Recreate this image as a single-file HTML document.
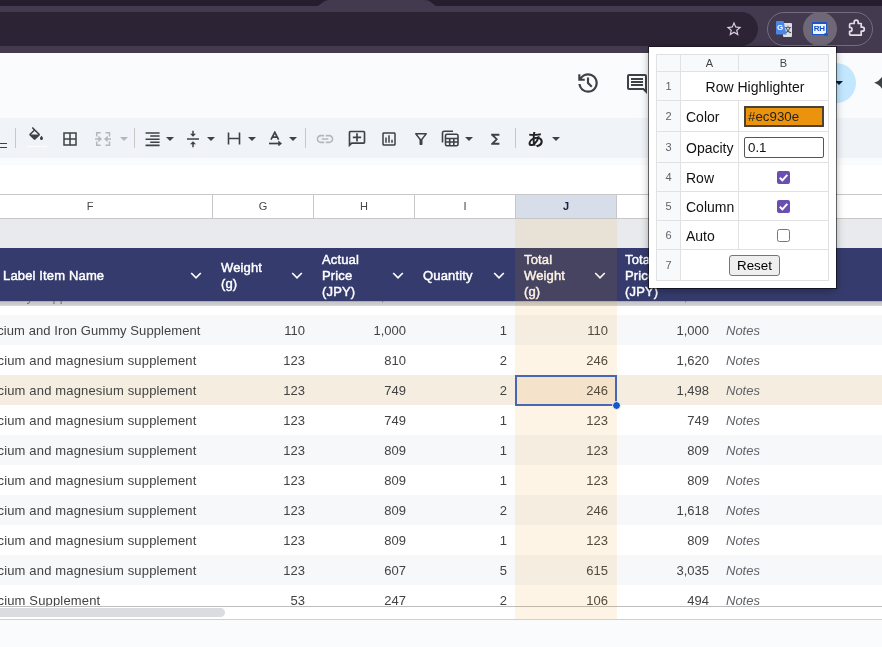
<!DOCTYPE html>
<html lang="en"><head><meta charset="utf-8"><title>Row Highlighter</title>
<style>
*{box-sizing:border-box;margin:0;padding:0}
html,body{width:882px;height:647px;overflow:hidden;background:#f9fbfd;font-family:"Liberation Sans","Noto Sans CJK JP",sans-serif}
#root{position:relative;width:882px;height:647px;overflow:hidden;will-change:transform}
.abs{position:absolute}
.cell{position:absolute;font-size:13px;color:#434343;white-space:nowrap;line-height:32px;height:30px}
.num{text-align:right}
.hd{position:absolute;font-size:13px;font-weight:400;color:#fff;line-height:16px;white-space:nowrap;letter-spacing:0.15px;-webkit-text-stroke:0.45px #fff}
.colh{position:absolute;top:195px;height:23px;line-height:23px;font-size:11px;color:#444746;text-align:center}
.pl{position:absolute;font-size:14px;color:#111;line-height:20px;white-space:nowrap}
.rn{position:absolute;left:657px;width:23px;text-align:center;font-size:11px;color:#5f6368;line-height:14px}
</style></head>
<body><div id="root">
<div class="abs" style="left:0;top:0;width:882px;height:53px;background:#443a50"></div>
<div class="abs" style="left:0;top:0;width:882px;height:6px;background:#261e2e"></div>
<svg class="abs" style="left:300px;top:0" width="150" height="7" viewBox="0 0 150 7"><path d="M12 7 C22 7 21 0 30 0 H124 C133 0 132 7 142 7 Z" fill="#443a50"/></svg>
<div class="abs" style="left:-40px;top:12px;width:798px;height:34px;border-radius:17px;background:#2c2335"></div>
<svg style="position:absolute;left:725px;top:20px" width="18" height="18" viewBox="0 0 24 24" ><path fill="#dacfe1" d="M22 9.24l-7.19-.62L12 2 9.19 8.63 2 9.24l5.46 4.73L5.820 21 12 17.27 18.18 21l-1.630-7.030L22 9.240zM12 15.400l-3.760 2.270 1-4.280-3.320-2.880 4.380-.380L12 6.100l1.710 4.040 4.380.38-3.320 2.880 1 4.280L12 15.400z"/></svg>
<div class="abs" style="left:767px;top:12px;width:106px;height:34px;border-radius:17px;border:1px solid #756c80"></div>
<div class="abs" style="left:803px;top:12px;width:34px;height:34px;border-radius:17px;background:#6f6878"></div>
<div class="abs" style="left:783px;top:23px;width:9px;height:14px;background:#dcdfe4;border-radius:1px;color:#4a4f57;font-size:7px;line-height:14px;text-align:right;padding-right:0.5px;font-weight:700">文</div>
<svg class="abs" style="left:776px;top:21px" width="11" height="14" viewBox="0 0 11 14"><path d="M1 0H7.500L10.500 13.500H1a1 1 0 0 1-1-1V1a1 1 0 0 1 1-1z" fill="#4a86e8"/></svg>
<div class="abs" style="left:776px;top:21px;width:8px;height:13px;color:#fff;font-size:8px;font-weight:700;line-height:13px;text-align:center">G</div>
<div class="abs" style="left:812px;top:22px;width:14.500px;height:13px;background:#eef3fe;border-top:2px solid #1a56c4;border-left:1.500px solid #1a56c4;border-right:0.500px solid #1a56c4;border-bottom:0.500px solid #1a56c4;color:#1a4fc0;font-size:8px;font-weight:700;line-height:10px;text-align:center;letter-spacing:-0.2px">RH</div>
<div class="abs" style="left:824px;top:32.500px;width:3.500px;height:3.500px;border-radius:2px;background:#1a56c4"></div>
<svg style="position:absolute;left:847px;top:18px" width="20" height="20" viewBox="0 0 20 20" ><path fill="none" stroke="#e3dde8" stroke-width="1.7" stroke-linejoin="round" d="M3.800 5.500H7.200V4.200a2 2 0 0 1 4 0V5.500H14.200V9.200h1.100a2 2 0 0 1 0 4H14.200V17.200H3.800a1.200 1.200 0 0 1-1.200-1.200V13.400h.4a2 2 0 0 0 0-4h-.4V6.700a1.200 1.200 0 0 1 1.200-1.200z"/></svg>
<svg style="position:absolute;left:575px;top:69.5px" width="26" height="26" viewBox="0 0 24 24" ><path fill="#3f4244" d="M12 21q-3.450 0-6.012-2.287T3.050 13H5.100q.35 2.600 2.313 4.300T12 19q2.925 0 4.963-2.037T19 12t-2.037-4.963T12 5q-1.725 0-3.225.8T6.250 8H9v2H3V4h2v2.350q1.275-1.600 3.113-2.475T12 3q1.875 0 3.513.712t2.850 1.925 1.925 2.850T21 12t-.712 3.513-1.925 2.850-2.850 1.925T12 21m2.800-4.800L11 12.400V7h2v4.600l3.200 3.200z"/></svg>
<svg style="position:absolute;left:625px;top:72px" width="24" height="24" viewBox="0 0 24 24" ><path fill="#3f4244" d="M21.990 4c0-1.100-.89-2-1.990-2H4c-1.100 0-2 .9-2 2v12c0 1.100.9 2 2 2h14l4 4-.01-18zM20 4v13.170L18.830 16H4V4h16zM6 12h12v2H6zm0-3h12v2H6zm0-3h12v2H6z"/></svg>
<div class="abs" style="left:760px;top:63px;width:96px;height:40px;border-radius:20px;background:#c2e7ff"></div>
<svg style="position:absolute;left:835px;top:81px" width="8" height="4" viewBox="0 0 8 4"><path d="M0 0h8L4 4z" fill="#001d35"/></svg>
<svg class="abs" style="left:870px;top:70px" width="12" height="26" viewBox="870 70 12 26"><path fill="#3f4244" d="M874.200 82.800Q879.200 81.300 882.500 76.300V89.500Q879.200 84.300 874.200 82.800z"/></svg>
<div class="abs" style="left:-30px;top:118px;width:960px;height:40px;border-radius:20px;background:#f0f4f9"></div>
<div class="abs" style="left:0;top:143px;width:7px;height:1px;background:#3f4244"></div>
<div class="abs" style="left:0;top:147px;width:7px;height:1px;background:#3f4244"></div>
<div class="abs" style="left:15px;top:128px;width:1px;height:20px;background:#c7c7c7"></div>
<svg style="position:absolute;left:26.6px;top:126.5px" width="18.3" height="18.3" viewBox="0 0 24 24" ><path fill="#3f4244" d="M16.560 8.940L7.620 0 6.210 1.410l2.380 2.380-5.150 5.150c-.59.590-.59 1.540 0 2.120l5.500 5.500c.29.290.68.440 1.060.440s.77-.15 1.060-.44l5.500-5.500c.59-.58.590-1.530 0-2.120zM5.210 10L10 5.210 14.790 10H5.210zM19 11.500s-2 2.170-2 3.500c0 1.100.9 2 2 2s2-.9 2-2c0-1.330-2-3.500-2-3.500z"/></svg>
<div class="abs" style="left:27px;top:146px;width:20px;height:1px;background:#fafcfe"></div>
<svg style="position:absolute;left:61px;top:130px" width="18" height="18" viewBox="0 0 24 24" ><path fill="#3f4244" d="M3 3v18h18V3H3zm8 16H5v-6h6v6zm0-8H5V5h6v6zm8 8h-6v-6h6v6zm0-8h-6V5h6v6z"/></svg>
<svg style="position:absolute;left:94px;top:131px" width="18" height="16" viewBox="0 0 18 16" ><g fill="none" stroke="#b4b8bc" stroke-width="1.5"><path d="M6.700 1.700H2.700V5.500M2.700 10.500V14.200H6.700M11.500 1.700H15.500V5.500M15.500 10.500V14.200H11.500"/><path d="M1 8H5M17 8H13"/></g><path fill="#b4b8bc" d="M4.300 4.800L8 8L4.300 11.200zM13.700 4.800L10 8L13.700 11.200z"/></svg>
<svg style="position:absolute;left:120px;top:137px" width="8" height="4" viewBox="0 0 8 4"><path d="M0 0h8L4 4z" fill="#b4b8bc"/></svg>
<div class="abs" style="left:134px;top:128px;width:1px;height:20px;background:#c7c7c7"></div>
<svg style="position:absolute;left:139.5px;top:126px" width="24" height="24" viewBox="0 0 24 24" ><path fill="#3f4244" transform="translate(3.2,3.8) scale(0.78)" d="M3 21h18v-2H3v2zm6-4h12v-2H9v2zm-6-4h18v-2H3v2zm6-4h12V7H9v2zM3 3v2h18V3H3z"/></svg>
<svg style="position:absolute;left:166px;top:137px" width="8" height="4" viewBox="0 0 8 4"><path d="M0 0h8L4 4z" fill="#3f4244"/></svg>
<svg style="position:absolute;left:184px;top:130px" width="18" height="18" viewBox="0 0 24 24" ><path fill="#3f4244" d="M8 19h3v4h2v-4h3l-4-4-4 4zm8-14h-3V1h-2v4H8l4 4 4-4zM4 11v2h16v-2H4z"/></svg>
<svg style="position:absolute;left:207px;top:137px" width="8" height="4" viewBox="0 0 8 4"><path d="M0 0h8L4 4z" fill="#3f4244"/></svg>
<svg style="position:absolute;left:227px;top:131px" width="15" height="15" viewBox="0 0 15 15" ><g fill="none" stroke="#3f4244" stroke-width="1.6"><path d="M1.500 1.500v12M12.500 1.500v12M1.500 7.500h11"/></g></svg>
<svg style="position:absolute;left:248px;top:137px" width="8" height="4" viewBox="0 0 8 4"><path d="M0 0h8L4 4z" fill="#3f4244"/></svg>
<svg style="position:absolute;left:268px;top:131px" width="15" height="15" viewBox="0 0 15 15" ><g fill="none" stroke="#3f4244" stroke-width="1.7"><path d="M3 8.700L6.800 1.300 10.600 8.700M4.300 6.200h5"/><path d="M1 12.500h10.500"/></g><path fill="#3f4244" d="M10.300 9.500L14 12.500L10.300 15.500z"/></svg>
<svg style="position:absolute;left:289px;top:137px" width="8" height="4" viewBox="0 0 8 4"><path d="M0 0h8L4 4z" fill="#3f4244"/></svg>
<div class="abs" style="left:305px;top:128px;width:1px;height:20px;background:#c7c7c7"></div>
<svg style="position:absolute;left:315px;top:129px" width="20" height="20" viewBox="0 0 24 24" ><path fill="#b4b8bc" d="M3.900 12c0-1.710 1.390-3.100 3.100-3.100h4V7H7c-2.760 0-5 2.240-5 5s2.240 5 5 5h4v-1.900H7c-1.710 0-3.100-1.390-3.100-3.100zM8 13h8v-2H8v2zm9-6h-4v1.900h4c1.710 0 3.100 1.390 3.100 3.100s-1.390 3.100-3.100 3.100h-4V17h4c2.760 0 5-2.240 5-5s-2.240-5-5-5z"/></svg>
<svg style="position:absolute;left:347px;top:129px" width="20" height="20" viewBox="0 0 24 24" ><path fill="#3f4244" transform="translate(24,0) scale(-1,1)" d="M22 4c0-1.100-.9-2-2-2H4c-1.100 0-2 .9-2 2v12c0 1.100.9 2 2 2h14l4 4V4zm-2 13.170L18.830 16H4V4h16v13.170zM13 5h-2v4H7v2h4v4h2v-4h4V9h-4z"/></svg>
<svg style="position:absolute;left:380px;top:130px" width="18" height="18" viewBox="0 0 24 24" ><path fill="#3f4244" d="M9 17H7v-7h2v7zm4 0h-2V7h2v10zm4 0h-2v-4h2v4zm2 2H5V5h14v14zm0-16H5c-1.100 0-2 .9-2 2v14c0 1.100.9 2 2 2h14c1.100 0 2-.9 2-2V5c0-1.100-.9-2-2-2z"/></svg>
<svg style="position:absolute;left:412px;top:130px" width="18" height="18" viewBox="0 0 24 24" ><path fill="#3f4244" d="M7 6h10l-5.010 6.300L7 6zm-2.750-.39C6.270 8.200 10 13 10 13v6c0 .55.45 1 1 1h2c.55 0 1-.45 1-1v-6s3.720-4.800 5.740-7.390c.51-.66.040-1.610-.79-1.610H5.040c-.83 0-1.300.95-.79 1.610z"/></svg>
<svg style="position:absolute;left:441px;top:130px" width="19" height="17" viewBox="0 0 19 17" ><g fill="none" stroke="#3f4244" stroke-width="1.6"><path d="M1.500 12.500V3a1.800 1.800 0 0 1 1.800-1.800H12"/><rect x="4.500" y="4.200" width="12.500" height="11.500" rx="1.500"/><path d="M4.500 8.500h12.500M4.500 12h12.500M8.700 8.500v7M12.800 8.500v7"/></g></svg>
<svg style="position:absolute;left:465px;top:137px" width="8" height="4" viewBox="0 0 8 4"><path d="M0 0h8L4 4z" fill="#3f4244"/></svg>
<svg style="position:absolute;left:487px;top:131px" width="16.5" height="16.5" viewBox="0 0 24 24" ><path fill="#3f4244" d="M18 4H6v2l6.500 6L6 18v2h12v-3h-7l5-5-5-5h7z"/></svg>
<div class="abs" style="left:515px;top:128px;width:1px;height:20px;background:#c7c7c7"></div>
<div class="abs" style="left:527px;top:129.500px;font-size:17px;font-weight:700;line-height:22px;color:#202124">あ</div>
<svg style="position:absolute;left:552px;top:137px" width="8" height="4" viewBox="0 0 8 4"><path d="M0 0h8L4 4z" fill="#3f4244"/></svg>
<div class="abs" style="left:0;top:165px;width:882px;height:29px;background:#fff"></div>
<div class="abs" style="left:0;top:194px;width:882px;height:412px;background:#fff"></div>
<div class="abs" style="left:0;top:194px;width:882px;height:1px;background:#c7c7c7"></div>
<div class="abs" style="left:516px;top:195px;width:101px;height:23px;background:#d7dde9"></div>
<div class="colh" style="left:80px;width:20px">F</div>
<div class="abs" style="left:212px;top:195px;width:1px;height:23px;background:#c7c7c7"></div>
<div class="colh" style="left:213px;width:100px">G</div>
<div class="abs" style="left:313px;top:195px;width:1px;height:23px;background:#c7c7c7"></div>
<div class="colh" style="left:314px;width:100px">H</div>
<div class="abs" style="left:414px;top:195px;width:1px;height:23px;background:#c7c7c7"></div>
<div class="colh" style="left:415px;width:100px">I</div>
<div class="abs" style="left:515px;top:195px;width:1px;height:23px;background:#c7c7c7"></div>
<div class="colh" style="left:516px;width:100px;font-weight:700;color:#202040">J</div>
<div class="abs" style="left:616px;top:195px;width:1px;height:23px;background:#c7c7c7"></div>
<div class="abs" style="left:717px;top:195px;width:1px;height:23px;background:#c7c7c7"></div>
<div class="abs" style="left:0;top:218px;width:882px;height:1px;background:#c7c7c7"></div>
<div class="abs" style="left:0;top:219px;width:882px;height:29px;background:#e8eaed"></div>
<div class="abs" style="left:0;top:248px;width:882px;height:53px;background:#353b6c"></div>
<div class="abs" style="left:0;top:301px;width:882px;height:5px;background:linear-gradient(#9496ab 0,#c6c6c8 21%,#cfcfcf 80%,#dedede 100%)"></div>
<div class="hd" style="left:3px;top:268px">Label Item Name</div>
<svg class="abs" style="left:190px;top:271px" width="12" height="10" viewBox="0 0 12 10"><path d="M1.200 2l4.800 4.800L10.800 2" fill="none" stroke="#fff" stroke-width="1.7"/></svg>
<div class="hd" style="left:221px;top:260px">Weight<br>(g)</div>
<svg class="abs" style="left:291px;top:271px" width="12" height="10" viewBox="0 0 12 10"><path d="M1.200 2l4.800 4.800L10.800 2" fill="none" stroke="#fff" stroke-width="1.7"/></svg>
<div class="hd" style="left:322px;top:252px">Actual<br>Price<br>(JPY)</div>
<svg class="abs" style="left:392px;top:271px" width="12" height="10" viewBox="0 0 12 10"><path d="M1.200 2l4.800 4.800L10.800 2" fill="none" stroke="#fff" stroke-width="1.7"/></svg>
<div class="hd" style="left:423px;top:268px">Quantity</div>
<svg class="abs" style="left:493px;top:271px" width="12" height="10" viewBox="0 0 12 10"><path d="M1.200 2l4.800 4.800L10.800 2" fill="none" stroke="#fff" stroke-width="1.7"/></svg>
<div class="hd" style="left:524px;top:252px">Total<br>Weight<br>(g)</div>
<svg class="abs" style="left:594px;top:271px" width="12" height="10" viewBox="0 0 12 10"><path d="M1.200 2l4.800 4.800L10.800 2" fill="none" stroke="#fff" stroke-width="1.7"/></svg>
<div class="hd" style="left:625px;top:252px">Total<br>Price<br>(JPY)</div>
<div class="abs" style="left:0;top:301px;width:882px;height:305px;overflow:hidden">
<div class="cell" style="left:-194px;width:300px;text-align:right;top:-20.500px;color:#777">Vitamin Daily Supplement</div>
<div class="cell num" style="left:314px;width:92px;top:-20.500px;color:#777">1,000</div>
<div class="cell num" style="left:617px;width:92px;top:-20.500px;color:#777">1,000</div>
<div class="abs" style="left:0;top:14px;width:882px;height:30px;background:#f6f8f9"></div>
<div class="cell" style="left:-22.500px;top:14px;letter-spacing:0.08px">Calcium and Iron Gummy Supplement</div>
<div class="cell num" style="left:213px;width:92px;top:14px">110</div>
<div class="cell num" style="left:314px;width:92px;top:14px">1,000</div>
<div class="cell num" style="left:415px;width:92px;top:14px">1</div>
<div class="cell num" style="left:516px;width:92px;top:14px">110</div>
<div class="cell num" style="left:617px;width:92px;top:14px">1,000</div>
<div class="cell" style="left:726px;top:14px;font-style:italic;color:#5f6368">Notes</div>
<div class="abs" style="left:0;top:44px;width:882px;height:30px;background:#ffffff"></div>
<div class="cell" style="left:-22.500px;top:44px;letter-spacing:0.16px">Calcium and magnesium supplement</div>
<div class="cell num" style="left:213px;width:92px;top:44px">123</div>
<div class="cell num" style="left:314px;width:92px;top:44px">810</div>
<div class="cell num" style="left:415px;width:92px;top:44px">2</div>
<div class="cell num" style="left:516px;width:92px;top:44px">246</div>
<div class="cell num" style="left:617px;width:92px;top:44px">1,620</div>
<div class="cell" style="left:726px;top:44px;font-style:italic;color:#5f6368">Notes</div>
<div class="abs" style="left:0;top:74px;width:882px;height:30px;background:#f6f8f9"></div>
<div class="abs" style="left:0;top:74px;width:882px;height:30px;background:rgba(236,147,14,0.1)"></div>
<div class="cell" style="left:-22.500px;top:74px;letter-spacing:0.16px">Calcium and magnesium supplement</div>
<div class="cell num" style="left:213px;width:92px;top:74px">123</div>
<div class="cell num" style="left:314px;width:92px;top:74px">749</div>
<div class="cell num" style="left:415px;width:92px;top:74px">2</div>
<div class="cell num" style="left:516px;width:92px;top:74px">246</div>
<div class="cell num" style="left:617px;width:92px;top:74px">1,498</div>
<div class="cell" style="left:726px;top:74px;font-style:italic;color:#5f6368">Notes</div>
<div class="abs" style="left:0;top:104px;width:882px;height:30px;background:#ffffff"></div>
<div class="cell" style="left:-22.500px;top:104px;letter-spacing:0.16px">Calcium and magnesium supplement</div>
<div class="cell num" style="left:213px;width:92px;top:104px">123</div>
<div class="cell num" style="left:314px;width:92px;top:104px">749</div>
<div class="cell num" style="left:415px;width:92px;top:104px">1</div>
<div class="cell num" style="left:516px;width:92px;top:104px">123</div>
<div class="cell num" style="left:617px;width:92px;top:104px">749</div>
<div class="cell" style="left:726px;top:104px;font-style:italic;color:#5f6368">Notes</div>
<div class="abs" style="left:0;top:134px;width:882px;height:30px;background:#f6f8f9"></div>
<div class="cell" style="left:-22.500px;top:134px;letter-spacing:0.16px">Calcium and magnesium supplement</div>
<div class="cell num" style="left:213px;width:92px;top:134px">123</div>
<div class="cell num" style="left:314px;width:92px;top:134px">809</div>
<div class="cell num" style="left:415px;width:92px;top:134px">1</div>
<div class="cell num" style="left:516px;width:92px;top:134px">123</div>
<div class="cell num" style="left:617px;width:92px;top:134px">809</div>
<div class="cell" style="left:726px;top:134px;font-style:italic;color:#5f6368">Notes</div>
<div class="abs" style="left:0;top:164px;width:882px;height:30px;background:#ffffff"></div>
<div class="cell" style="left:-22.500px;top:164px;letter-spacing:0.16px">Calcium and magnesium supplement</div>
<div class="cell num" style="left:213px;width:92px;top:164px">123</div>
<div class="cell num" style="left:314px;width:92px;top:164px">809</div>
<div class="cell num" style="left:415px;width:92px;top:164px">1</div>
<div class="cell num" style="left:516px;width:92px;top:164px">123</div>
<div class="cell num" style="left:617px;width:92px;top:164px">809</div>
<div class="cell" style="left:726px;top:164px;font-style:italic;color:#5f6368">Notes</div>
<div class="abs" style="left:0;top:194px;width:882px;height:30px;background:#f6f8f9"></div>
<div class="cell" style="left:-22.500px;top:194px;letter-spacing:0.16px">Calcium and magnesium supplement</div>
<div class="cell num" style="left:213px;width:92px;top:194px">123</div>
<div class="cell num" style="left:314px;width:92px;top:194px">809</div>
<div class="cell num" style="left:415px;width:92px;top:194px">2</div>
<div class="cell num" style="left:516px;width:92px;top:194px">246</div>
<div class="cell num" style="left:617px;width:92px;top:194px">1,618</div>
<div class="cell" style="left:726px;top:194px;font-style:italic;color:#5f6368">Notes</div>
<div class="abs" style="left:0;top:224px;width:882px;height:30px;background:#ffffff"></div>
<div class="cell" style="left:-22.500px;top:224px;letter-spacing:0.16px">Calcium and magnesium supplement</div>
<div class="cell num" style="left:213px;width:92px;top:224px">123</div>
<div class="cell num" style="left:314px;width:92px;top:224px">809</div>
<div class="cell num" style="left:415px;width:92px;top:224px">1</div>
<div class="cell num" style="left:516px;width:92px;top:224px">123</div>
<div class="cell num" style="left:617px;width:92px;top:224px">809</div>
<div class="cell" style="left:726px;top:224px;font-style:italic;color:#5f6368">Notes</div>
<div class="abs" style="left:0;top:254px;width:882px;height:30px;background:#f6f8f9"></div>
<div class="cell" style="left:-22.500px;top:254px;letter-spacing:0.16px">Calcium and magnesium supplement</div>
<div class="cell num" style="left:213px;width:92px;top:254px">123</div>
<div class="cell num" style="left:314px;width:92px;top:254px">607</div>
<div class="cell num" style="left:415px;width:92px;top:254px">5</div>
<div class="cell num" style="left:516px;width:92px;top:254px">615</div>
<div class="cell num" style="left:617px;width:92px;top:254px">3,035</div>
<div class="cell" style="left:726px;top:254px;font-style:italic;color:#5f6368">Notes</div>
<div class="abs" style="left:0;top:284px;width:882px;height:30px;background:#ffffff"></div>
<div class="cell" style="left:-22.500px;top:284px;letter-spacing:0.16px">Calcium Supplement</div>
<div class="cell num" style="left:213px;width:92px;top:284px">53</div>
<div class="cell num" style="left:314px;width:92px;top:284px">247</div>
<div class="cell num" style="left:415px;width:92px;top:284px">2</div>
<div class="cell num" style="left:516px;width:92px;top:284px">106</div>
<div class="cell num" style="left:617px;width:92px;top:284px">494</div>
<div class="cell" style="left:726px;top:284px;font-style:italic;color:#5f6368">Notes</div>
</div>
<div class="abs" style="left:0;top:606px;width:882px;height:1px;background:#bdbdbd"></div>
<div class="abs" style="left:0;top:607px;width:882px;height:12px;background:#fff"></div>
<div class="abs" style="left:-10px;top:608px;width:235px;height:9px;border-radius:5px;background:#dadce0"></div>
<div class="abs" style="left:0;top:619px;width:882px;height:1px;background:#d0d0d0"></div>
<div class="abs" style="left:515px;top:219px;width:102px;height:400px;background:rgba(236,147,14,0.1)"></div>
<div class="abs" style="left:515px;top:375px;width:102px;height:31px;border:2px solid #4667b3"></div>
<div class="abs" style="left:612px;top:401px;width:9px;height:9px;border-radius:5px;background:#1a56c4;border:1px solid #fff"></div>
<div class="abs" style="left:649px;top:47px;width:187px;height:241px;background:#fff;box-shadow:0 0 0 1px rgba(0,0,0,.55),0 2px 8px rgba(0,0,0,.35)"></div>
<div class="abs" style="left:656px;top:54px;width:173px;height:227px;border:1px solid #e1e1e1"></div>
<div class="abs" style="left:656px;top:54px;width:25px;height:227px;background:#f8f9fa;border:1px solid #e1e1e1"></div>
<div class="abs" style="left:656px;top:54px;width:173px;height:18px;background:#f8f9fa;border:1px solid #e1e1e1"></div>
<div class="abs" style="left:656px;top:71px;width:173px;height:1px;background:#e1e1e1"></div>
<div class="abs" style="left:656px;top:100px;width:173px;height:1px;background:#e1e1e1"></div>
<div class="abs" style="left:656px;top:131px;width:173px;height:1px;background:#e1e1e1"></div>
<div class="abs" style="left:656px;top:162px;width:173px;height:1px;background:#e1e1e1"></div>
<div class="abs" style="left:656px;top:191px;width:173px;height:1px;background:#e1e1e1"></div>
<div class="abs" style="left:656px;top:220px;width:173px;height:1px;background:#e1e1e1"></div>
<div class="abs" style="left:656px;top:249px;width:173px;height:1px;background:#e1e1e1"></div>
<div class="abs" style="left:738px;top:54px;width:1px;height:17px;background:#e1e1e1"></div>
<div class="abs" style="left:680px;top:54px;width:1px;height:17px;background:#e1e1e1"></div>
<div class="abs" style="left:738px;top:101px;width:1px;height:149px;background:#e1e1e1"></div>
<div class="abs" style="left:681px;top:56px;width:57px;text-align:center;font-size:11px;line-height:14px;color:#444">A</div>
<div class="abs" style="left:739px;top:56px;width:89px;text-align:center;font-size:11px;line-height:14px;color:#444">B</div>
<div class="rn" style="top:78.5px">1</div>
<div class="rn" style="top:108.5px">2</div>
<div class="rn" style="top:139.5px">3</div>
<div class="rn" style="top:169.5px">4</div>
<div class="rn" style="top:198.5px">5</div>
<div class="rn" style="top:227.5px">6</div>
<div class="rn" style="top:257.5px">7</div>
<div class="pl" style="left:681px;width:148px;text-align:center;top:77px">Row Highlighter</div>
<div class="pl" style="left:686px;top:107px">Color</div>
<div class="pl" style="left:686px;top:138px">Opacity</div>
<div class="pl" style="left:686px;top:168px">Row</div>
<div class="pl" style="left:686px;top:197px">Column</div>
<div class="pl" style="left:686px;top:226px">Auto</div>
<div class="abs" style="left:744px;top:106px;width:80px;height:21px;background:#ec930e;border:2px solid #4a4236;font-size:13.33px;line-height:17px;padding-left:2px;color:#222">#ec930e</div>
<div class="abs" style="left:744px;top:137px;width:80px;height:21px;background:#fff;border:1px solid #555;border-radius:2px;font-size:13.33px;line-height:19px;padding-left:3px;color:#111">0.1</div>
<svg class="abs" style="left:777px;top:171px" width="13" height="13" viewBox="0 0 13 13"><rect width="13" height="13" rx="2" fill="#6a4fb0"/><path d="M2.800 6.800l2.600 2.600L10.300 3.800" fill="none" stroke="#fff" stroke-width="2"/></svg>
<svg class="abs" style="left:777px;top:200px" width="13" height="13" viewBox="0 0 13 13"><rect width="13" height="13" rx="2" fill="#6a4fb0"/><path d="M2.800 6.800l2.600 2.600L10.300 3.800" fill="none" stroke="#fff" stroke-width="2"/></svg>
<div class="abs" style="left:777px;top:229px;width:13px;height:13px;border:1px solid #767676;border-radius:2.5px;background:#fff"></div>
<div class="abs" style="left:729px;top:255px;width:51px;height:21px;background:#efefef;border:1px solid #767676;border-radius:3px;font-size:13.33px;line-height:19px;text-align:center;color:#000">Reset</div>
</div></body></html>
